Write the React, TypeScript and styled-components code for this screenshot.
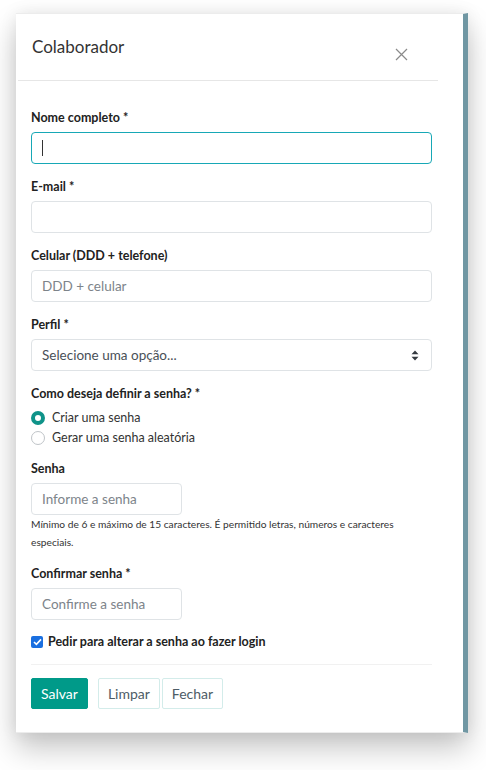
import styled, { createGlobalStyle } from "styled-components";

const GlobalStyle = createGlobalStyle`
  html, body {
    margin: 0;
    padding: 0;
    background: #ffffff;
    min-height: 100vh;
  }
  body {
    font-family: Lato, "Open Sans", sans-serif;
    color: #212529;
  }
  * {
    box-sizing: border-box;
  }
`;

export default function App() {
  return (
    <>
      <GlobalStyle />
      <Modal>
        <Header>
          <Title>Colaborador</Title>
          <CloseButton aria-label="Fechar">
            <svg width="13" height="13" viewBox="0 0 13 13">
              <path d="M1 1 L12 12 M12 1 L1 12" stroke="#8a8a8a" strokeWidth="1.2" />
            </svg>
          </CloseButton>
        </Header>

        <Body>
          <Field>
            <Label>Nome completo *</Label>
            <Input $focused>
              <Caret />
            </Input>
          </Field>

          <Field>
            <Label>E-mail *</Label>
            <Input />
          </Field>

          <Field>
            <Label>Celular (DDD + telefone)</Label>
            <Input>
              <Placeholder>DDD + celular</Placeholder>
            </Input>
          </Field>

          <Field>
            <Label>Perfil *</Label>
            <Input>
              <Placeholder $dark>Selecione uma opção...</Placeholder>
              <svg width="8" height="11" viewBox="0 0 8 11">
                <path d="M4 0.5 L7.5 4.3 L0.5 4.3 Z M4 10.5 L7.5 6.7 L0.5 6.7 Z" fill="#343a40" />
              </svg>
            </Input>
          </Field>

          <Field>
            <Label>Como deseja definir a senha? *</Label>
            <RadioList>
              <RadioRow>
                <Radio $checked />
                Criar uma senha
              </RadioRow>
              <RadioRow>
                <Radio />
                Gerar uma senha aleatória
              </RadioRow>
            </RadioList>
          </Field>

          <Field>
            <Label>Senha</Label>
            <Input $short>
              <Placeholder>Informe a senha</Placeholder>
            </Input>
            <Help>
              Mínimo de 6 e máximo de 15 caracteres. É permitido letras, números e caracteres
              especiais.
            </Help>
          </Field>

          <Field>
            <Label>Confirmar senha *</Label>
            <Input $short>
              <Placeholder>Confirme a senha</Placeholder>
            </Input>
          </Field>

          <CheckRow>
            <CheckBox>
              <svg width="9" height="8" viewBox="0 0 9 8">
                <path d="M1 4 L3.4 6.4 L8 1.4" stroke="#fff" strokeWidth="1.6" fill="none" />
              </svg>
            </CheckBox>
            Pedir para alterar a senha ao fazer login
          </CheckRow>

          <Footer>
            <Button $primary>Salvar</Button>
            <ButtonGroup>
              <Button>Limpar</Button>
              <Button>Fechar</Button>
            </ButtonGroup>
          </Footer>
        </Body>
      </Modal>
    </>
  );
}

const Modal = styled.div`
  margin: 13px 0 0 16px;
  width: 452px;
  background: #fff;
  border-top: 1px solid #ececec;
  border-bottom: 1px solid #ececec;
  border-right: 5px solid #7097a3;
  box-shadow: 0 16px 28px rgba(0, 0, 0, 0.22), 0 0 16px rgba(0, 0, 0, 0.08);
`;

const Header = styled.div`
  display: flex;
  align-items: center;
  justify-content: space-between;
  height: 67px;
  margin: 0 25px 0 2px;
  padding: 0 30px 0 14px;
  border-bottom: 1px solid #e6e6e6;
`;

const Title = styled.h1`
  margin: 0 0 1px;
  font-size: 17px;
  font-weight: 400;
  color: #333;
`;

const CloseButton = styled.button`
  display: flex;
  border: 0;
  padding: 0;
  background: none;
  margin-top: 14px;
`;

const Body = styled.div`
  display: flex;
  flex-direction: column;
  padding: 28px 31px 23px 15px;
`;

const Field = styled.div`
  display: flex;
  flex-direction: column;
  margin-bottom: 14px;
`;

const Label = styled.label`
  font-size: 12.5px;
  font-weight: 700;
  color: #222;
  line-height: 18px;
  margin-bottom: 5px;
`;

const Input = styled.div<{ $focused?: boolean; $short?: boolean }>`
  display: flex;
  align-items: center;
  justify-content: space-between;
  height: 32px;
  width: ${(p) => (p.$short ? "151px" : "100%")};
  padding: 0 12px 0 10px;
  border: 1px solid ${(p) => (p.$focused ? "#17a8b6" : "#dfe3e6")};
  border-radius: 4px;
  background: #fff;
`;

const Caret = styled.span`
  width: 1px;
  height: 16px;
  background: #333;
`;

const Placeholder = styled.span<{ $dark?: boolean }>`
  font-size: 13.5px;
  color: ${(p) => (p.$dark ? "#495057" : "#7d848a")};
`;

const RadioList = styled.div`
  display: flex;
  flex-direction: column;
  gap: 4px;
  margin-top: 2px;
`;

const RadioRow = styled.div`
  display: flex;
  align-items: center;
  gap: 7px;
  font-size: 12.5px;
  color: #333;
  line-height: 16px;
`;

const Radio = styled.span<{ $checked?: boolean }>`
  width: 14px;
  height: 14px;
  border-radius: 50%;
  border: ${(p) => (p.$checked ? "4px solid #0f9389" : "1px solid #bfc4c8")};
  background: #fff;
`;

const Help = styled.div`
  margin-top: 0;
  font-size: 10.2px;
  line-height: 18px;
  color: #333;
`;

const CheckRow = styled.div`
  display: flex;
  align-items: center;
  gap: 5px;
  font-size: 12.5px;
  font-weight: 700;
  color: #222;
  line-height: 16px;
  padding-bottom: 14px;
  border-bottom: 1px solid #f1f1f1;
`;

const CheckBox = styled.span`
  display: flex;
  align-items: center;
  justify-content: center;
  width: 12px;
  height: 12px;
  border-radius: 2px;
  background: #1a6fe0;
`;

const Footer = styled.div`
  display: flex;
  gap: 10px;
  padding-top: 13px;
`;

const ButtonGroup = styled.div`
  display: flex;
  gap: 2px;
`;

const Button = styled.button<{ $primary?: boolean }>`
  height: 31px;
  padding: 0 9px;
  font-family: Lato, "Open Sans", sans-serif;
  font-size: 14px;
  border-radius: 2px;
  border: 1px solid ${(p) => (p.$primary ? "#009a89" : "#d3ecea")};
  background: ${(p) => (p.$primary ? "#009a89" : "#fff")};
  color: ${(p) => (p.$primary ? "#fff" : "#4d5c66")};
`;
